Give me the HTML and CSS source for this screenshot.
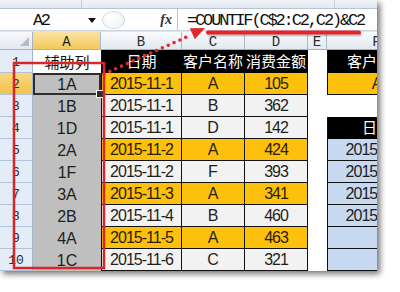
FILE: index.html
```html
<!DOCTYPE html>
<html>
<head>
<meta charset="utf-8">
<link rel="stylesheet" href="styles.css">
</head>
<body>
<div class="frame">
  <div class="ribbon"><span class="seg s1"></span><span class="seg s2"></span><span class="seg s3"></span></div>
  <div class="fbar">
    <div class="namebox"><span class="nb-text">A2</span><svg class="nb-arrow" width="8" height="5" viewBox="0 0 8 5"><path d="M0 0H8L4 5Z" fill="#111"/></svg></div>
    <div class="grip"></div>
    <div class="fx">fx</div>
    <div class="finput"><span class="ftext">=COUNTIF(C$2:C2,C2)&amp;C2</span></div>
  </div>
  <div class="gap"></div>
  <div class="sheet">
    <div class="corner"><span class="tri"></span></div>
    <div class="ch sel">A</div><div class="ch">B</div><div class="ch">C</div><div class="ch">D</div><div class="ch">E</div><div class="ch">F</div>

    <div class="rh">1</div><div class="cell a1 cjk">辅助列</div><div class="cell hd l cjk">日期</div><div class="cell hd cjk">客户名称</div><div class="cell hd cjk">消费金额</div><div class="cell e"></div><div class="cell hd l cjk">客户名称</div>

    <div class="rh sel">2</div><div class="cell aux active">1A</div><div class="cell o l num">2015-11-1</div><div class="cell o">A</div><div class="cell o num">105</div><div class="cell e"></div><div class="cell o l">A</div>

    <div class="rh">3</div><div class="cell aux">1B</div><div class="cell g l num">2015-11-1</div><div class="cell g">B</div><div class="cell g num">362</div><div class="cell e"></div><div class="cell e"></div>

    <div class="rh">4</div><div class="cell aux">1D</div><div class="cell g l num">2015-11-1</div><div class="cell g">D</div><div class="cell g num">142</div><div class="cell e"></div><div class="cell hd l cjk">日期</div>

    <div class="rh">5</div><div class="cell aux">2A</div><div class="cell o l num">2015-11-2</div><div class="cell o">A</div><div class="cell o num">424</div><div class="cell e"></div><div class="cell b l num">2015-11-1</div>

    <div class="rh">6</div><div class="cell aux">1F</div><div class="cell g l num">2015-11-2</div><div class="cell g">F</div><div class="cell g num">393</div><div class="cell e"></div><div class="cell b l num">2015-11-2</div>

    <div class="rh">7</div><div class="cell aux">3A</div><div class="cell o l num">2015-11-3</div><div class="cell o">A</div><div class="cell o num">341</div><div class="cell e"></div><div class="cell b l num">2015-11-3</div>

    <div class="rh">8</div><div class="cell aux">2B</div><div class="cell g l num">2015-11-4</div><div class="cell g">B</div><div class="cell g num">460</div><div class="cell e"></div><div class="cell b l num">2015-11-5</div>

    <div class="rh">9</div><div class="cell aux">4A</div><div class="cell o l num">2015-11-5</div><div class="cell o">A</div><div class="cell o num">463</div><div class="cell e"></div><div class="cell b l"></div>

    <div class="rh">10</div><div class="cell aux">1C</div><div class="cell g l num">2015-11-6</div><div class="cell g">C</div><div class="cell g num">321</div><div class="cell e"></div><div class="cell b l"></div>
  </div>
</div>
<svg class="annot" width="400" height="292" viewBox="0 0 400 292">
  <line x1="209" y1="34.5" x2="360" y2="34.5" stroke="#000" stroke-opacity="0.18" stroke-width="4" stroke-linecap="round"/>
  <line x1="208" y1="32.5" x2="359" y2="32.5" stroke="#e3252b" stroke-width="4" stroke-linecap="round"/>
  <rect x="14" y="63" width="90" height="205" fill="none" stroke="#d9262b" stroke-width="2.5"/>
  <line x1="104" y1="74" x2="191" y2="35" stroke="#e02a2a" stroke-width="3.6" stroke-linecap="round" stroke-dasharray="0 6.4"/>
  <polygon points="205,28 194.8,39.3 189.8,28.3" fill="#e02a2a"/>
</svg>
</body>
</html>
```
FILE: styles.css
```css
* { box-sizing: border-box; }
body {
  margin: 0;
  width: 400px;
  height: 292px;
  overflow: hidden;
  position: relative;
  background: #fff;
  font-family: "Liberation Sans", Arial, sans-serif;
  color: #1e1e1e;
}
.frame {
  width: 377px;
  height: 271px;
  overflow: hidden;
  background: #fff;
  box-shadow: 3px 3px 6px rgba(0, 0, 0, 0.55);
  display: flex;
  flex-direction: column;
}
.ribbon {
  height: 9px;
  flex: none;
  display: flex;
  background: linear-gradient(#f1f4f8, #e2e8f0);
  border-bottom: 1px solid #b8c4d3;
}
.seg { height: 100%; border-right: 1px solid #c3ccd8; }
.s1 { width: 82px; }
.s2 { width: 253px; }
.s3 { flex: 1; border-right: none; }
.fbar {
  height: 22px;
  flex: none;
  display: flex;
  align-items: center;
  background: #fff;
  border-bottom: 1px solid #c9d3df;
}
.namebox {
  width: 100px;
  height: 100%;
  display: flex;
  align-items: center;
  padding-left: 33px;
}
.nb-text, .ftext, .ch, .rh {
  font-family: "Liberation Mono", "Courier New", monospace;
}
.nb-text {
  font-size: 17px;
  display: inline-block;
  width: 40px;
  letter-spacing: -2.5px;
  color: #111;
  padding-top: 2px;
}
.nb-arrow { margin-left: 15px; margin-top: 1px; }
.grip {
  width: 23px;
  height: 18px;
  margin-left: 2px;
  border-radius: 50%;
  border: 1px solid #d3d8df;
  background: radial-gradient(circle at 35% 35%, #fff, #eef1f5);
}
.fx {
  width: 52px;
  text-align: right;
  padding-right: 5px;
  font-family: "Liberation Serif", serif;
  font-style: italic;
  font-weight: bold;
  font-size: 14px;
  color: #333;
}
.finput {
  flex: 1;
  height: 100%;
  border-left: 1px solid #b9c5d4;
  display: flex;
  align-items: center;
  padding-left: 9px;
  white-space: nowrap;
}
.ftext {
  font-size: 17px;
  letter-spacing: -2.15px;
  color: #111;
  padding-top: 2px;
}
.gap { height: 1px; flex: none; background: #dfe6ef; }
.sheet {
  display: grid;
  grid-template-columns: 33px 68px 81px 63px 63px 19px 100px;
  grid-template-rows: 18px 23px repeat(9, 22px);
}
.corner {
  background: linear-gradient(#f7f9fb, #e3e9f0);
  border-right: 1px solid #9fb3c9;
  border-bottom: 1px solid #9fb3c9;
  position: relative;
}
.tri {
  position: absolute;
  right: 3px;
  bottom: 3px;
  width: 0;
  height: 0;
  border-left: 9px solid transparent;
  border-bottom: 9px solid #b4bcc6;
}
.ch {
  background: linear-gradient(#f9fbfd, #e2e8ef);
  border-right: 1px solid #a9bbd0;
  border-bottom: 1px solid #9fb3c9;
  font-size: 14px;
  color: #2b2b2b;
  display: flex;
  align-items: center;
  justify-content: center;
  padding-top: 2px;
}
.ch.sel { background: linear-gradient(#fbe4a4, #f4c858); color: #222; }
.rh {
  background: #e4ecf7;
  border-right: 1px solid #9fb3c9;
  border-bottom: 1px solid #b1c3d6;
  font-size: 13px;
  color: #2b2b2b;
  display: flex;
  align-items: flex-end;
  justify-content: center;
  padding-bottom: 2px;
}
.rh.sel { background: linear-gradient(#f9d880, #f2c24e); }
.cell {
  display: flex;
  align-items: flex-end;
  justify-content: center;
  font-size: 16px;
  line-height: 19px;
  white-space: nowrap;
  overflow: hidden;
}
.cjk {
  font-family: "Noto Sans CJK SC", "Liberation Sans", sans-serif;
  font-size: 15px;
  line-height: 20px;
  padding-bottom: 1px;
}
.num { letter-spacing: -1px; }
.a1 { background: #fff; color: #111; }
.hd {
  background: #000;
  color: #fff;
  border-right: 1px solid #000;
  border-bottom: 1px solid #000;
}
.o, .g, .b {
  border-right: 1px solid #111;
  border-bottom: 1px solid #111;
  padding-bottom: 1px;
}
.o { background: #fdc00c; color: #2a2000; }
.g { background: #f2f2f2; }
.b { background: #c6d9f0; }
.l { border-left: 1px solid #111; }
.e { background: #fff; }
.aux { background: #bfbfbf; color: #1e1e1e; padding-bottom: 1px; }
.active {
  position: relative;
  box-shadow: inset 0 0 0 2px #2e2e2e;
  overflow: visible;
}
.active::after {
  content: "";
  position: absolute;
  right: -3px;
  bottom: -3px;
  width: 6px;
  height: 6px;
  background: #2e2e2e;
  border: 1px solid #fff;
}
.annot {
  position: absolute;
  left: 0;
  top: 0;
  pointer-events: none;
}
```
